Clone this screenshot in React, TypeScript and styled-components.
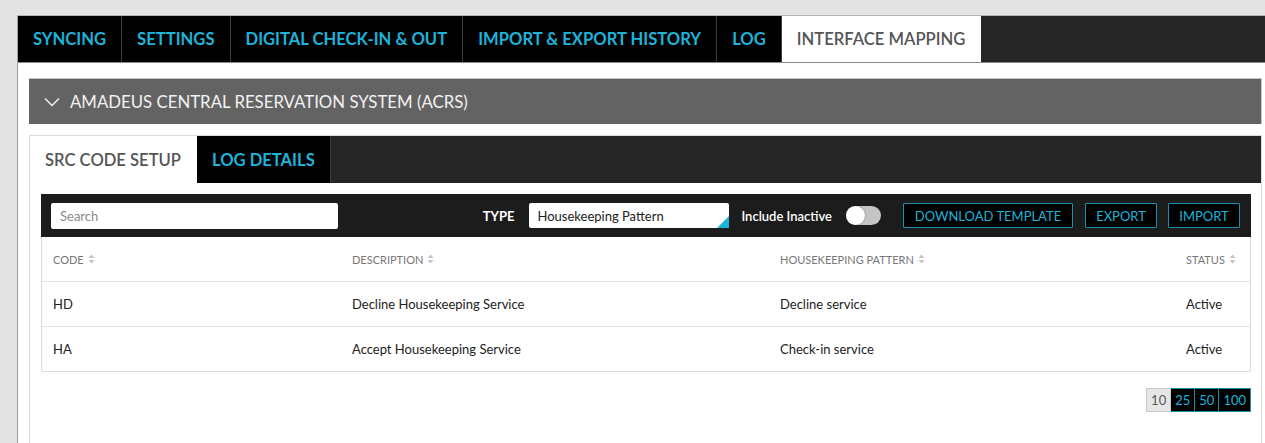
import React, { type FC } from 'react'
import styled, { createGlobalStyle } from 'styled-components'

const GlobalStyle = createGlobalStyle`
	* { box-sizing: border-box; }
	body {
		margin: 0;
		background: #e4e4e4;
		font-family: Lato, 'Open Sans', 'Liberation Sans', sans-serif;
		color: #222;
	}
`

const CYAN = '#1eb3d9'

const Page = styled.div`
	height: 443px;
	overflow: hidden;
	padding: 15px 0 0 17px;
`

const Frame = styled.div`
	background: #fff;
	border-left: 1px solid #9e9e9e;
	border-top: 1px solid #b5b5b5;
	height: 100%;
`

const TabBar = styled.nav`
	display: flex;
	height: 47px;
	background: #262626;
	border-bottom: 1px solid #8a8a8a;
`

const Tab = styled.div<{ $active?: boolean }>`
	display: flex;
	align-items: center;
	padding: 0 15px;
	height: 100%;
	font-size: 16.6px;
	font-weight: ${({ $active }) => ($active ? 600 : 700)};
	text-transform: uppercase;
	white-space: nowrap;
	color: ${({ $active }) => ($active ? '#555' : CYAN)};
	background: ${({ $active }) => ($active ? '#fff' : '#000')};
	border-right: 1px solid ${({ $active }) => ($active ? '#fff' : '#3c3c3c')};
`

const Content = styled.div`
	padding: 15px 3px 0 11px;
`

const Accordion = styled.div`
	display: flex;
	align-items: center;
	gap: 10px;
	height: 46px;
	padding: 0 15px;
	background: #636363;
	border-top: 1px solid #c4c4c4;
	border-right: 1px solid #c4c4c4;
	color: #f2f2f2;
	font-size: 16.8px;
	margin-bottom: 11px;
`

const Card = styled.div`
	border: 1px solid #dcdcdc;
	border-bottom: none;
`

const InnerTabs = styled.div`
	display: flex;
	height: 47px;
	background: #262626;
`

const CardBody = styled.div`
	padding: 11px 10px 40px 11px;
`

const Toolbar = styled.div`
	display: flex;
	align-items: center;
	justify-content: space-between;
	height: 43px;
	padding: 0 11px 0 10px;
	background: #1c1c1c;
`

const SearchInput = styled.input`
	width: 287px;
	height: 26px;
	border: none;
	border-radius: 2px;
	padding: 0 9px;
	font-family: inherit;
	font-size: 13px;
	color: #333;
	outline: none;
	&::placeholder { color: #8a8a8a; }
`

const Controls = styled.div`
	display: flex;
	align-items: center;
`

const Label = styled.span<{ $gap: number; $weight?: number }>`
	color: #fff;
	font-size: 13px;
	font-weight: ${({ $weight }) => $weight ?? 600};
	margin-right: ${({ $gap }) => $gap}px;
	white-space: nowrap;
`

const Select = styled.div`
	position: relative;
	width: 200px;
	height: 25px;
	background: #fff;
	border-radius: 2px;
	padding: 0 8px;
	display: flex;
	align-items: center;
	font-size: 13px;
	color: #222;
	margin-right: 12px;
	overflow: hidden;
	&::after {
		content: '';
		position: absolute;
		right: 0;
		bottom: 0;
		border-style: solid;
		border-width: 0 0 12px 12px;
		border-color: transparent transparent ${CYAN} transparent;
	}
`

const Toggle = styled.div`
	position: relative;
	width: 35px;
	height: 19px;
	border-radius: 10px;
	background: #c4c4c4;
	margin-right: 22px;
	&::before {
		content: '';
		position: absolute;
		left: 0;
		top: 0;
		width: 19px;
		height: 19px;
		border-radius: 50%;
		background: #fff;
		box-shadow: 0 0 2px rgba(0, 0, 0, 0.4);
	}
`

const OutlineButton = styled.button<{ $width: number; $gap?: number }>`
	width: ${({ $width }) => $width}px;
	height: 25px;
	margin-right: ${({ $gap }) => $gap ?? 0}px;
	background: #000;
	border: 1px solid #1b8eaa;
	border-radius: 1px;
	color: ${CYAN};
	font-family: inherit;
	font-size: 13px;
	text-transform: uppercase;
	padding: 0;
	white-space: nowrap;
`

const Table = styled.div`
	border: 1px solid #dcdcdc;
	border-top: none;
	border-radius: 0 0 2px 2px;
`

const Row = styled.div<{ $head?: boolean }>`
	display: grid;
	grid-template-columns: 299px 428px 406px auto;
	align-items: center;
	height: ${({ $head }) => ($head ? 44 : 45)}px;
	padding: 0 12px 0 11px;
	border-top: ${({ $head }) => ($head ? 'none' : '1px solid #e2e2e2')};
	font-size: ${({ $head }) => ($head ? 11 : 13)}px;
	color: ${({ $head }) => ($head ? '#777' : '#222')};
	text-transform: ${({ $head }) => ($head ? 'uppercase' : 'none')};
`

const Cell = styled.div`
	display: flex;
	align-items: center;
	gap: 4px;
	white-space: nowrap;
`

const Pager = styled.div`
	display: flex;
	justify-content: flex-end;
	margin-top: 16px;
`

const PageButton = styled.div<{ $active?: boolean }>`
	height: 24px;
	padding: 0 4px;
	display: flex;
	align-items: center;
	justify-content: center;
	font-size: 13px;
	color: ${({ $active }) => ($active ? '#555' : CYAN)};
	background: ${({ $active }) => ($active ? '#e6e6e6' : '#000')};
	border: 1px solid ${({ $active }) => ($active ? '#c8c8c8' : '#1b8eaa')};
	border-left-width: ${({ $active }) => ($active ? 1 : 0)}px;
`

const SortIcon: FC = () => (
	<svg width='7' height='10' viewBox='0 0 7 10'>
		<path d='M3.5 0.5 L6.5 4 H0.5 Z' fill='#c4c4c4' />
		<path d='M3.5 9.5 L6.5 6 H0.5 Z' fill='#c4c4c4' />
	</svg>
)

const ChevronDown: FC = () => (
	<svg width='16' height='10' viewBox='0 0 16 10'>
		<path d='M1 1.5 L8 8.5 L15 1.5' fill='none' stroke='#f2f2f2' strokeWidth='1.4' />
	</svg>
)

const topTabs = ['Syncing', 'Settings', 'Digital Check-in & Out', 'Import & Export History', 'Log']

const rows = [
	{ code: 'HD', description: 'Decline Housekeeping Service', pattern: 'Decline service', status: 'Active' },
	{ code: 'HA', description: 'Accept Housekeeping Service', pattern: 'Check-in service', status: 'Active' },
]

const App: FC = () => (
	<>
		<GlobalStyle />
		<Page>
			<Frame>
				<TabBar>
					{topTabs.map((tab) => (
						<Tab key={tab}>{tab}</Tab>
					))}
					<Tab $active>Interface Mapping</Tab>
				</TabBar>

				<Content>
					<Accordion>
						<ChevronDown />
						AMADEUS CENTRAL RESERVATION SYSTEM (ACRS)
					</Accordion>

					<Card>
						<InnerTabs>
							<Tab $active>Src Code Setup</Tab>
							<Tab>Log Details</Tab>
						</InnerTabs>

						<CardBody>
							<Toolbar>
								<SearchInput placeholder='Search' />
								<Controls>
									<Label $gap={15} $weight={700}>TYPE</Label>
									<Select>Housekeeping Pattern</Select>
									<Label $gap={14}>Include Inactive</Label>
									<Toggle />
									<OutlineButton $width={170} $gap={12}>Download Template</OutlineButton>
									<OutlineButton $width={72} $gap={11}>Export</OutlineButton>
									<OutlineButton $width={72}>Import</OutlineButton>
								</Controls>
							</Toolbar>

							<Table>
								<Row $head>
									<Cell>Code <SortIcon /></Cell>
									<Cell>Description <SortIcon /></Cell>
									<Cell>Housekeeping Pattern <SortIcon /></Cell>
									<Cell>Status <SortIcon /></Cell>
								</Row>
								{rows.map((row) => (
									<Row key={row.code}>
										<Cell>{row.code}</Cell>
										<Cell>{row.description}</Cell>
										<Cell>{row.pattern}</Cell>
										<Cell>{row.status}</Cell>
									</Row>
								))}
							</Table>

							<Pager>
								<PageButton $active>10</PageButton>
								<PageButton>25</PageButton>
								<PageButton>50</PageButton>
								<PageButton>100</PageButton>
							</Pager>
						</CardBody>
					</Card>
				</Content>
			</Frame>
		</Page>
	</>
)

export default App
